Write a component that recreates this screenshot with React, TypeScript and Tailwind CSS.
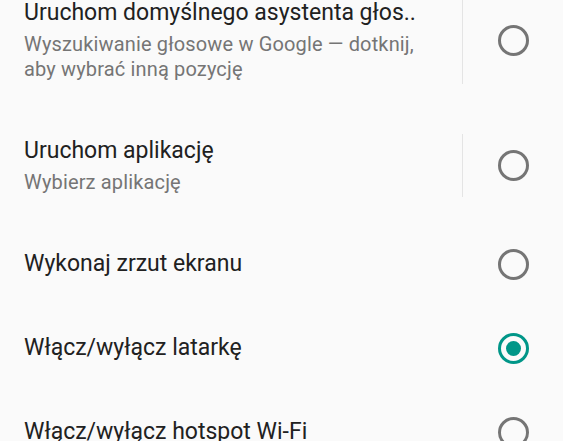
const items = [
  {
    title: "Uruchom domyślnego asystenta głos..",
    sub: ["Wyszukiwanie głosowe w Google — dotknij,", "aby wybrać inną pozycję"],
    divider: true,
    checked: false,
  },
  { title: "Uruchom aplikację", sub: ["Wybierz aplikację"], divider: true, checked: false },
  { title: "Wykonaj zrzut ekranu", sub: [], divider: false, checked: false },
  { title: "Włącz/wyłącz latarkę", sub: [], divider: false, checked: true },
  { title: "Włącz/wyłącz hotspot Wi-Fi", sub: [], divider: false, checked: false },
];

const Radio = ({ checked }: { checked: boolean }) =>
  checked ? (
    <div className="w-[31px] h-[31px] rounded-full border-[3px] border-[#009688] flex items-center justify-center">
      <div className="w-[15px] h-[15px] rounded-full bg-[#009688]" />
    </div>
  ) : (
    <div className="w-[31px] h-[31px] rounded-full border-[3px] border-[#757575]" />
  );

export default function App() {
  return (
    <div
      className="w-[563px] h-[441px] overflow-hidden bg-[#fafafa]"
      style={{ fontFamily: "Roboto, 'Noto Sans', sans-serif" }}
    >
      <div className="-mt-[29px] flex flex-col">
        {items.map((it) => (
          <div key={it.title} className="flex items-stretch">
            <div className="w-[462px] pl-6 pr-3 py-[27px] flex flex-col justify-center">
              <div className="text-[23px] leading-[30px] text-[#212121] whitespace-nowrap">{it.title}</div>
              {it.sub.length > 0 && (
                <div className="mt-1 text-[20px] leading-[25px] tracking-[0.15px] text-[#757575]">
                  {it.sub.map((s) => (
                    <div key={s} className="whitespace-nowrap">{s}</div>
                  ))}
                </div>
              )}
            </div>
            <div className={it.divider ? "w-px my-[25px] bg-[#e4e4e4]" : "w-px"} />
            <div className="flex-1 flex items-center justify-center">
              <Radio checked={it.checked} />
            </div>
          </div>
        ))}
      </div>
    </div>
  );
}
